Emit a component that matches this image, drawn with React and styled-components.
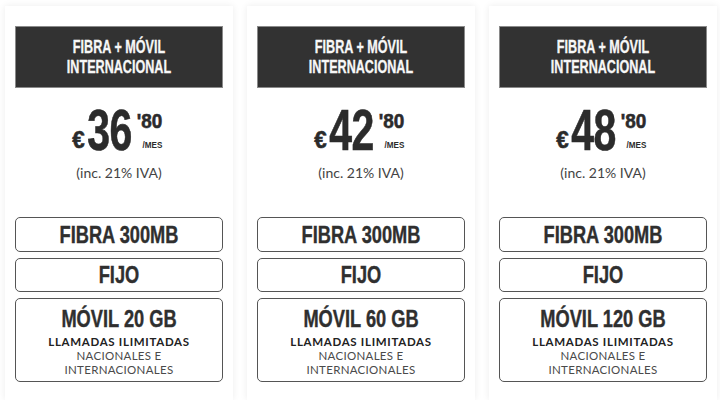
import styled, { createGlobalStyle } from 'styled-components';

const GlobalStyle = createGlobalStyle`
	html, body {
		margin: 0;
		padding: 0;
		background: #ffffff;
	}
	body {
		font-family: Lato, "Open Sans", sans-serif;
		color: #333333;
	}
`;

// Bold grotesque squeezed sideways to stand in for the condensed display face.
const CONDENSED = `"Liberation Sans", Arial, sans-serif`;

// Row of the three plan cards.
const Plans = styled.div`
	display: grid;
	grid-template-columns: repeat(3, 228px);
	gap: 14px;
	padding: 6px 0 0 5px;
`;

// White card with a soft shadow.
const Card = styled.div`
	display: flex;
	flex-direction: column;
	padding: 20px 10px 18px;
	background: #ffffff;
	box-shadow: 0 0 7px rgba(0, 0, 0, 0.08);
`;

// Dark title band on top of each card.
const Header = styled.div`
	padding: 10px 0;
	background: #323232;
	border: 1px solid #8a8a8a;
`;

const Title = styled.div`
	font-family: ${CONDENSED};
	font-weight: 700;
	font-size: 18px;
	line-height: 20px;
	color: #f7f7f7;
	text-align: center;
	transform: scaleX(0.7);
	-webkit-text-stroke: 0.3px #f7f7f7;
`;

// Big price with euro sign and cents column.
const PriceRow = styled.div`
	display: flex;
	justify-content: center;
	align-items: flex-start;
	margin: 15px 4px 0 0;
	height: 56px;
	font-family: ${CONDENSED};
	font-weight: 700;
	color: #2b2b2b;
	-webkit-text-stroke: 0.6px #2b2b2b;
	transform: scaleX(0.72);
`;

const Currency = styled.span`
	font-size: 24px;
	line-height: 1;
	margin: 25px 5px 0 0;
	transform: scaleX(1.3);
`;

const Amount = styled.span`
	font-size: 57px;
	line-height: 1;
	letter-spacing: -1px;
	margin-top: -1px;
`;

const Cents = styled.div`
	display: flex;
	flex-direction: column;
	align-items: flex-end;
	margin: 7px 0 0 11px;
	transform: scaleX(1.25);
`;

const CentsValue = styled.span`
	font-size: 21px;
	line-height: 1;
`;

const PerMonth = styled.span`
	font-size: 9px;
	line-height: 1;
	margin-top: 10px;
	-webkit-text-stroke: 0;
`;

const Tax = styled.div`
	margin-top: 6px;
	font-size: 14px;
	line-height: 16px;
	color: #444444;
	text-align: center;
`;

// Stack of outlined boxes listing what the plan includes.
const Features = styled.div`
	display: flex;
	flex-direction: column;
	gap: 6px;
	margin-top: 36px;
`;

const Feature = styled.div`
	padding: ${({ $tall }) => ($tall ? '7px 0 4px' : '0')};
	border: 1px solid #555555;
	border-radius: 5px;
`;

const FeatureName = styled.div`
	font-family: ${CONDENSED};
	font-weight: 700;
	font-size: 24px;
	line-height: ${({ $h }) => $h}px;
	color: #2f2f2f;
	-webkit-text-stroke: 0.4px #2f2f2f;
	text-align: center;
	transform: scaleX(0.76);
`;

const Note = styled.div`
	font-size: 11.5px;
	line-height: 14px;
	letter-spacing: ${({ $bold }) => ($bold ? '0.7px' : '0.3px')};
	text-align: center;
	color: ${({ $bold }) => ($bold ? '#222222' : '#4a4a4a')};
	font-weight: ${({ $bold }) => ($bold ? 700 : 400)};
	margin-top: ${({ $first }) => ($first ? '3px' : '0')};
`;

const plans = [
	{ price: '36', data: '20 GB' },
	{ price: '42', data: '60 GB' },
	{ price: '48', data: '120 GB' },
];

export default function App() {
	return (
		<>
			<GlobalStyle />
			<Plans>
				{plans.map((plan) => (
					<Card key={plan.price}>
						<Header>
							<Title>
								FIBRA + MÓVIL
								<br />
								INTERNACIONAL
							</Title>
						</Header>
						<PriceRow>
							<Currency>€</Currency>
							<Amount>{plan.price}</Amount>
							<Cents>
								<CentsValue>'80</CentsValue>
								<PerMonth>/MES</PerMonth>
							</Cents>
						</PriceRow>
						<Tax>(inc. 21% IVA)</Tax>
						<Features>
							<Feature>
								<FeatureName $h={33}>FIBRA 300MB</FeatureName>
							</Feature>
							<Feature>
								<FeatureName $h={32}>FIJO</FeatureName>
							</Feature>
							<Feature $tall>
								<FeatureName $h={26}>MÓVIL {plan.data}</FeatureName>
								<Note $bold $first>LLAMADAS ILIMITADAS</Note>
								<Note>NACIONALES E</Note>
								<Note>INTERNACIONALES</Note>
							</Feature>
						</Features>
					</Card>
				))}
			</Plans>
		</>
	);
}
